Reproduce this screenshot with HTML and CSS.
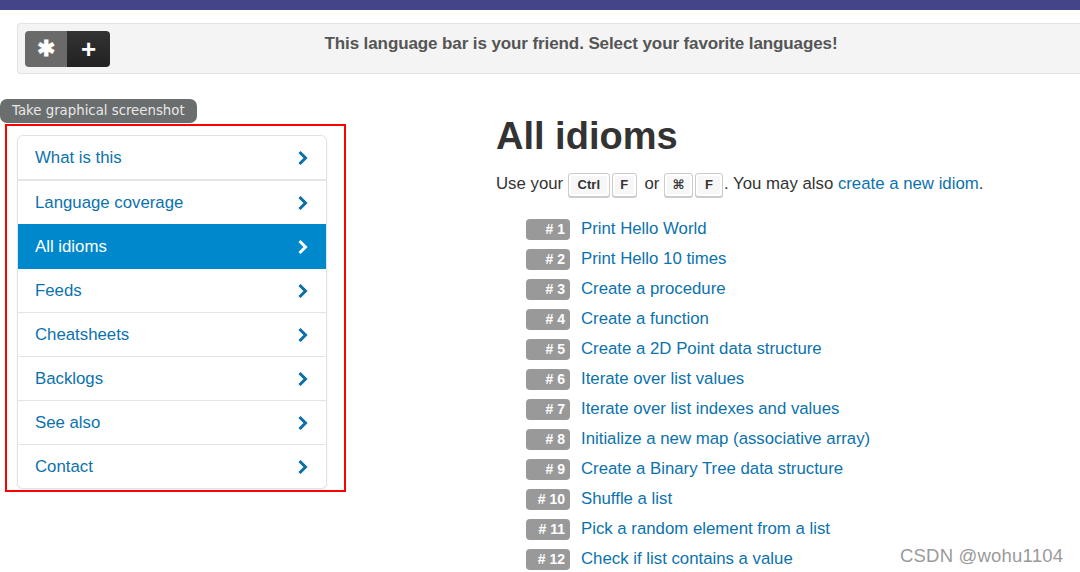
FILE: index.html
```html
<!DOCTYPE html>
<html>
<head>
<meta charset="utf-8">
<title>All idioms</title>
<link rel="stylesheet" href="styles.css">
</head>
<body>
<div class="topbar"></div>
<div class="langbar">
  <div class="btn-group">
    <span class="btn btn-star">&#10033;</span>
    <span class="btn btn-plus">+</span>
  </div>
  <div class="langbar-text">This language bar is your friend. Select your favorite languages!</div>
  <div></div>
</div>

<div class="tooltip">Take graphical screenshot</div>

<div class="layout">
  <div class="frame">
    <ul class="nav">
      <li><a href="#">What is this</a><span class="chev"><svg viewBox="0 0 12 16" width="12" height="16"><polyline points="2.5,2 8.5,8 2.5,14" /></svg></span></li>
      <li><a href="#">Language coverage</a><span class="chev"><svg viewBox="0 0 12 16" width="12" height="16"><polyline points="2.5,2 8.5,8 2.5,14" /></svg></span></li>
      <li class="active"><a href="#">All idioms</a><span class="chev"><svg viewBox="0 0 12 16" width="12" height="16"><polyline points="2.5,2 8.5,8 2.5,14" /></svg></span></li>
      <li><a href="#">Feeds</a><span class="chev"><svg viewBox="0 0 12 16" width="12" height="16"><polyline points="2.5,2 8.5,8 2.5,14" /></svg></span></li>
      <li><a href="#">Cheatsheets</a><span class="chev"><svg viewBox="0 0 12 16" width="12" height="16"><polyline points="2.5,2 8.5,8 2.5,14" /></svg></span></li>
      <li><a href="#">Backlogs</a><span class="chev"><svg viewBox="0 0 12 16" width="12" height="16"><polyline points="2.5,2 8.5,8 2.5,14" /></svg></span></li>
      <li><a href="#">See also</a><span class="chev"><svg viewBox="0 0 12 16" width="12" height="16"><polyline points="2.5,2 8.5,8 2.5,14" /></svg></span></li>
      <li><a href="#">Contact</a><span class="chev"><svg viewBox="0 0 12 16" width="12" height="16"><polyline points="2.5,2 8.5,8 2.5,14" /></svg></span></li>
    </ul>
  </div>

  <div class="content">
    <h1>All idioms</h1>
    <p class="intro">Use your <kbd class="kw">Ctrl</kbd><kbd class="k2 kgap">F</kbd> or <kbd class="kc">&#8984;</kbd><kbd class="k2 k3">F</kbd>. You may also <a href="#">create a new idiom</a>.</p>
    <ul class="idioms">
      <li><span class="badge"># 1</span><a href="#">Print Hello World</a></li>
      <li><span class="badge"># 2</span><a href="#">Print Hello 10 times</a></li>
      <li><span class="badge"># 3</span><a href="#">Create a procedure</a></li>
      <li><span class="badge"># 4</span><a href="#">Create a function</a></li>
      <li><span class="badge"># 5</span><a href="#">Create a 2D Point data structure</a></li>
      <li><span class="badge"># 6</span><a href="#">Iterate over list values</a></li>
      <li><span class="badge"># 7</span><a href="#">Iterate over list indexes and values</a></li>
      <li><span class="badge"># 8</span><a href="#">Initialize a new map (associative array)</a></li>
      <li><span class="badge"># 9</span><a href="#">Create a Binary Tree data structure</a></li>
      <li><span class="badge"># 10</span><a href="#">Shuffle a list</a></li>
      <li><span class="badge"># 11</span><a href="#">Pick a random element from a list</a></li>
      <li><span class="badge"># 12</span><a href="#">Check if list contains a value</a></li>
    </ul>
  </div>
</div>

<div class="watermark">CSDN @wohu1104</div>
</body>
</html>
```

FILE: styles.css
```css
html, body {
  margin: 0;
  padding: 0;
}
body {
  font-family: "Liberation Sans", Arial, sans-serif;
  font-size: 16.8px;
  color: #333;
  background: #fff;
  overflow: hidden;
  width: 1080px;
  height: 572px;
  position: relative;
}
a {
  color: #0b72ad;
  text-decoration: none;
}
.topbar {
  height: 10px;
  background: #444488;
}
.langbar {
  margin: 13px 0 0 17px;
  height: 49px;
  background: #f4f4f4;
  border: 1px solid #e3e3e3;
  border-right: none;
  border-radius: 4px 0 0 4px;
  display: grid;
  grid-template-columns: 1fr auto 1fr;
  align-items: start;
}
.btn-group {
  display: flex;
  margin: 7px 0 0 7px;
  height: 36px;
}
.btn {
  display: flex;
  align-items: center;
  justify-content: center;
  color: #fff;
  font-weight: bold;
  height: 36px;
}
.btn-star {
  width: 42px;
  background: #6a6a6a;
  border-radius: 4px 0 0 4px;
  font-size: 22px;
}
.btn-plus {
  width: 43px;
  background: linear-gradient(#333, #222);
  border-radius: 0 4px 4px 0;
  font-size: 26px;
}
.langbar-text {
  font-weight: bold;
  font-size: 17px;
  color: #555;
  padding-top: 10px;
  margin-left: 64px;
  letter-spacing: -0.1px;
}
.tooltip {
  position: absolute;
  left: 0;
  top: 99px;
  width: 185px;
  height: 24px;
  padding-left: 12px;
  background: #6b6e6e;
  color: #e8e8e8;
  border-radius: 7px;
  font-family: "DejaVu Sans", sans-serif;
  font-size: 13.3px;
  line-height: 24px;
  z-index: 2;
}
.layout {
  display: flex;
  align-items: flex-start;
  margin-top: 50px;
}
.frame {
  margin-left: 5px;
  border: 2px solid #f00;
  padding: 9px 17px 1px 10px;
}
.nav {
  list-style: none;
  margin: 0;
  padding: 0;
  width: 308px;
  border: 1px solid #e3e3e3;
  border-radius: 6px;
  box-shadow: 0 1px 3px rgba(0,0,0,0.06);
  background: #fff;
  overflow: hidden;
}
.nav li {
  display: flex;
  align-items: center;
  justify-content: space-between;
  height: 43px;
  padding: 0 17px 0 17px;
  border-top: 1px solid #e5e5e5;
}
.nav li:first-child {
  border-top: none;
  border-bottom: 1px solid #e5e5e5;
}
.nav li.active {
  background: #0088cc;
  border-top-color: #0088cc;
}
.nav li.active + li {
  border-top-color: #0088cc;
}
.nav li.active a {
  color: #fff;
}
.chev svg {
  display: block;
  fill: none;
  stroke: #0b6ea8;
  stroke-width: 3;
}
.nav li.active .chev svg {
  stroke: #fff;
}
.content {
  margin-left: 150px;
}
h1 {
  margin: -9px 0 15px;
  font-size: 38px;
  line-height: 42px;
  font-weight: bold;
  color: #333;
}
.intro {
  margin: 0;
  line-height: 24px;
}
kbd {
  display: inline-block;
  box-sizing: border-box;
  font-family: "Liberation Sans", "DejaVu Sans", sans-serif;
  font-weight: bold;
  font-size: 13px;
  color: #333;
  background: #f7f7f7;
  border: 1px solid #ccc;
  border-radius: 3px;
  box-shadow: 0 1px 0 rgba(0,0,0,0.2), inset 0 0 0 2px #fff;
  padding: 0;
  height: 24px;
  line-height: 22px;
  text-align: center;
  vertical-align: 0;
}
kbd.kw {
  width: 42px;
}
kbd.k2 {
  width: 25px;
  margin-left: 2px;
}
kbd.kgap {
  margin-right: 3px;
}
kbd.kc {
  width: 29px;
}
kbd.k3 {
  width: 28px;
  margin-right: 1px;
}
.idioms {
  list-style: none;
  margin: 17px 0 0 30px;
  padding: 0;
}
.idioms li {
  display: flex;
  align-items: center;
  height: 30px;
}
.badge {
  width: 39px;
  height: 21px;
  padding-right: 5px;
  background: #999;
  color: #fff;
  font-weight: bold;
  font-size: 14px;
  line-height: 21px;
  text-align: right;
  border-radius: 4px;
  margin-right: 11px;
  white-space: nowrap;
}
.watermark {
  position: absolute;
  left: 900px;
  top: 545px;
  font-size: 18.5px;
  color: #9a9a9a;
  text-shadow: 0 0 1px #fff;
  letter-spacing: 0.2px;
}
```
